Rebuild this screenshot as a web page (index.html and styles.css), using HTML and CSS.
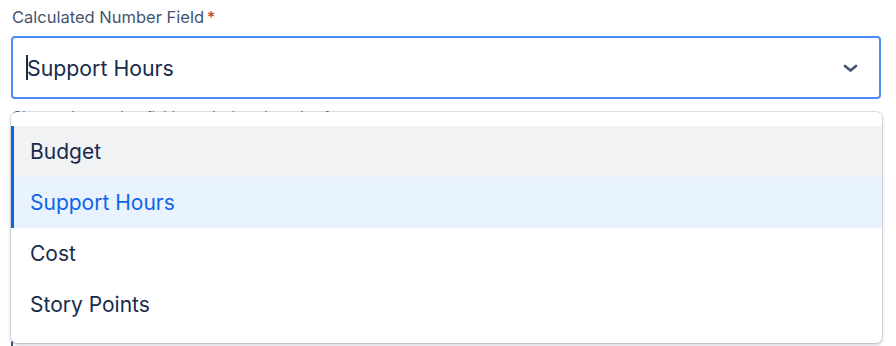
FILE: index.html
```html
<!DOCTYPE html>
<html lang="en">

<head>
  <meta charset="UTF-8">
  <meta name="viewport" content="width=device-width, initial-scale=1.0">
  <title>Calculated Number Field</title>
  <link rel="stylesheet" href="styles.css">
</head>

<body>
  <div class="field">
    <label class="label">Calculated Number Field<span class="required">*</span></label>
    <div class="select">
      <div class="value"><span class="caret"></span>Support Hours</div>
      <svg class="chevron" width="15" height="9" viewBox="0 0 15 9">
        <polyline points="2,2 7.5,6.5 13,2" fill="none" stroke="currentColor" stroke-width="2.7" stroke-linecap="round" stroke-linejoin="round"/>
      </svg>
    </div>
    <div class="helper">Choose the number field to calculate the value from</div>
    <ul class="menu">
      <li class="option option-hover">Budget</li>
      <li class="option option-selected">Support Hours</li>
      <li class="option">Cost</li>
      <li class="option">Story Points</li>
    </ul>
    <div class="next-field"></div>
  </div>
</body>

</html>
```

FILE: styles.css
```css
html,
body {
  height: 100%;
}

body {
  margin: 0;
  background: #fff;
  font-family: Inter, "Liberation Sans", sans-serif;
  color: #172B4D;
}

.field {
  position: relative;
  min-height: 346px;
  box-sizing: border-box;
  padding: 4px 15px 0 11px;
}

.label {
  display: block;
  font-size: 16.5px;
  line-height: 26px;
  color: #44546F;
  padding-left: 1px;
}

.required {
  color: #C9372C;
  margin-left: 3px;
}

.select {
  display: flex;
  align-items: center;
  height: 59px;
  margin-top: 6px;
  border: 2px solid #4C8BF5;
  border-radius: 4px;
  padding: 0 21px 0 13px;
}

.value {
  flex: 1;
  display: flex;
  align-items: center;
  font-size: 21.3px;
}

.caret {
  width: 2px;
  height: 25px;
  background: #172B4D;
  margin-right: -1px;
}

.chevron {
  color: #44546F;
  margin-top: 2px;
}

.helper {
  margin-top: 9px;
  font-size: 14px;
  color: #626F86;
  padding-left: 1px;
}

.next-field {
  margin-top: 215px;
  height: 20px;
  border-left: 2px solid #44546F;
  border-radius: 4px 0 0 0;
}

.menu {
  position: absolute;
  top: 112px;
  left: 11px;
  z-index: 1;
  width: 871px;
  box-sizing: border-box;
  margin: 0;
  padding: 14px 0 13px;
  list-style: none;
  background: #fff;
  border-radius: 6px;
  box-shadow: 0 0 0 1px rgba(9, 30, 66, 0.12), 0 2px 4px rgba(9, 30, 66, 0.2);
}

.option {
  height: 51px;
  display: flex;
  align-items: center;
  padding-left: 19px;
  font-size: 21px;
}

.option-hover {
  background: #F1F2F4;
  box-shadow: inset 3px 0 0 #0C66E4;
}

.option-selected {
  background: #E9F2FF;
  color: #0C66E4;
  box-shadow: inset 3px 0 0 #0C66E4;
}
```
